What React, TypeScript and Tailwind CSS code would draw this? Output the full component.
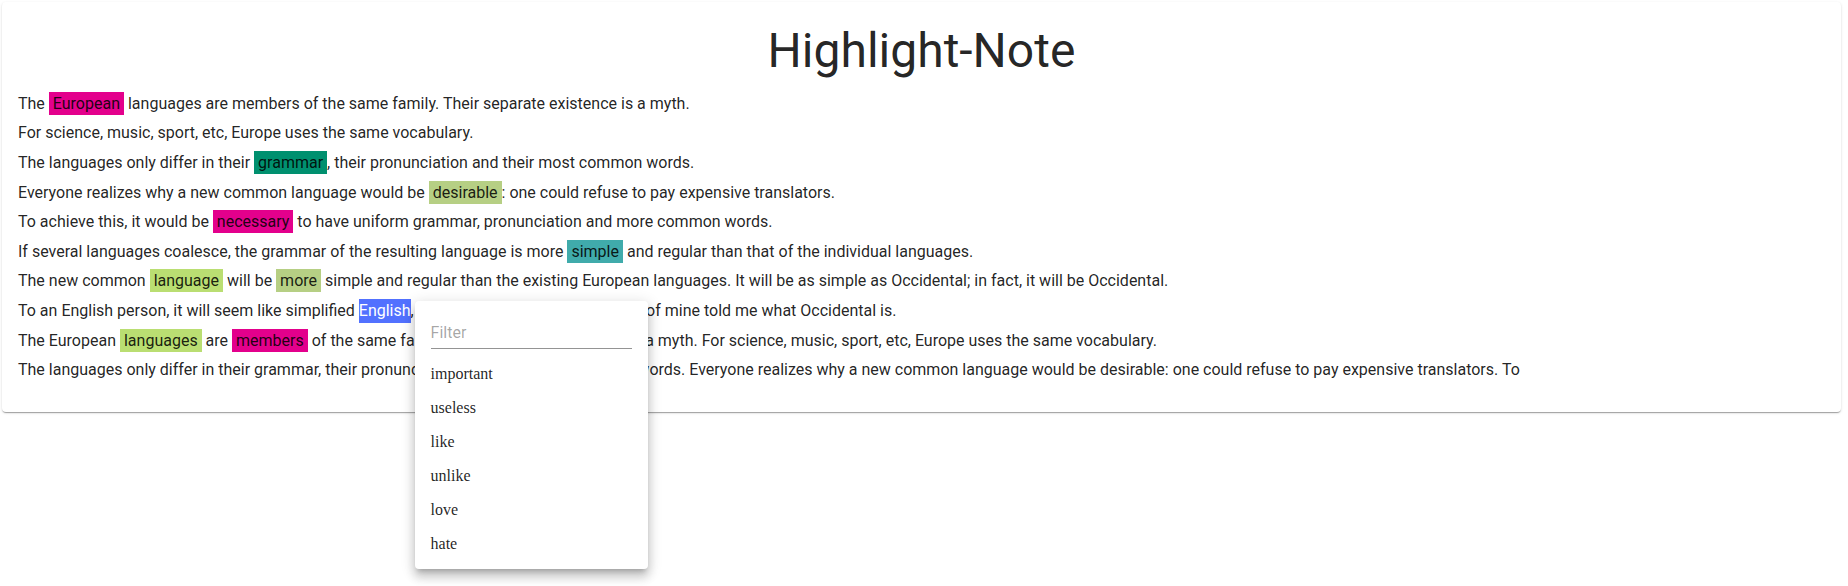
import { useState, type ReactNode } from "react";

const tones = {
  pink: "bg-[#e3008c]",
  green: "bg-[#00906f]",
  olive: "bg-[#b6cf84]",
  teal: "bg-[#40abab]",
  lime: "bg-[#bade72]",
};

function Mark({ tone, children }: { tone: keyof typeof tones; children: ReactNode }) {
  return <mark className={`px-1 py-0.5 text-inherit ${tones[tone]}`}>{children}</mark>;
}

const labels = ["important", "useless", "like", "unlike", "love", "hate"];

function LabelMenu() {
  const [filter, setFilter] = useState("");
  return (
    <div className="absolute top-0 left-full z-10 mt-0.5 ml-1 w-[233px] rounded bg-white px-4 pt-4 pb-2 text-black/87 shadow-[0_5px_5px_-3px_rgba(0,0,0,0.2),0_8px_10px_1px_rgba(0,0,0,0.14),0_3px_14px_2px_rgba(0,0,0,0.12)]">
      <input
        type="text"
        aria-label="Filter"
        placeholder="Filter"
        value={filter}
        onChange={(e) => setFilter(e.target.value)}
        className="mb-2 block h-8 w-full border-b border-black/42 bg-transparent text-base outline-none placeholder:text-black/36"
      />
      <ul className="font-['Liberation_Serif',serif]">
        {labels
          .filter((label) => label.includes(filter))
          .map((label) => (
            <li key={label}>
              <button type="button" className="block h-[34px] w-full text-left">
                {label}
              </button>
            </li>
          ))}
      </ul>
    </div>
  );
}

export default function App() {
  return (
    <main className="min-h-screen bg-white pt-0.5 pr-[7px] pb-8 pl-0.5 font-['Roboto',sans-serif] text-base text-black/87">
      <section className="rounded bg-white px-4 pt-[21px] pb-[27px] shadow-[0_2px_1px_-1px_rgba(0,0,0,0.2),0_1px_1px_0_rgba(0,0,0,0.14),0_1px_3px_0_rgba(0,0,0,0.12)]">
        <h1 className="mb-2.5 text-center text-5xl leading-14">Highlight-Note</h1>
        <div className="grid min-h-[296px] auto-rows-fr items-center">
          <p>
            The <Mark tone="pink">European</Mark> languages are members of the same family. Their separate existence is a myth.
          </p>
          <p>For science, music, sport, etc, Europe uses the same vocabulary.</p>
          <p>
            The languages only differ in their <Mark tone="green">grammar</Mark>, their pronunciation and their most common words.
          </p>
          <p>
            Everyone realizes why a new common language would be <Mark tone="olive">desirable</Mark>: one could refuse to pay expensive translators.
          </p>
          <p>
            To achieve this, it would be <Mark tone="pink">necessary</Mark> to have uniform grammar, pronunciation and more common words.
          </p>
          <p>
            If several languages coalesce, the grammar of the resulting language is more <Mark tone="teal">simple</Mark> and regular than that of the individual languages.
          </p>
          <p>
            The new common <Mark tone="lime">language</Mark> will be <Mark tone="olive">more</Mark> simple and regular than the existing European languages. It will be as simple as Occidental; in fact, it will be Occidental.
          </p>
          <p>
            To an English person, it will seem like simplified{" "}
            <span className="relative inline-block">
              <span className="block bg-[#5271ff] text-white">English</span>
              <LabelMenu />
            </span>
            , as a skeptical Cambridge friend of mine told me what Occidental is.
          </p>
          <p>
            The European <Mark tone="lime">languages</Mark> are <Mark tone="pink">members</Mark> of the same family. Their separate existence is a myth. For science, music, sport, etc, Europe uses the same vocabulary.
          </p>
          <p>
            The languages only differ in their grammar, their pronunciation and their most common words. Everyone realizes why a new common language would be desirable: one could refuse to pay expensive translators. To
          </p>
        </div>
      </section>
    </main>
  );
}
